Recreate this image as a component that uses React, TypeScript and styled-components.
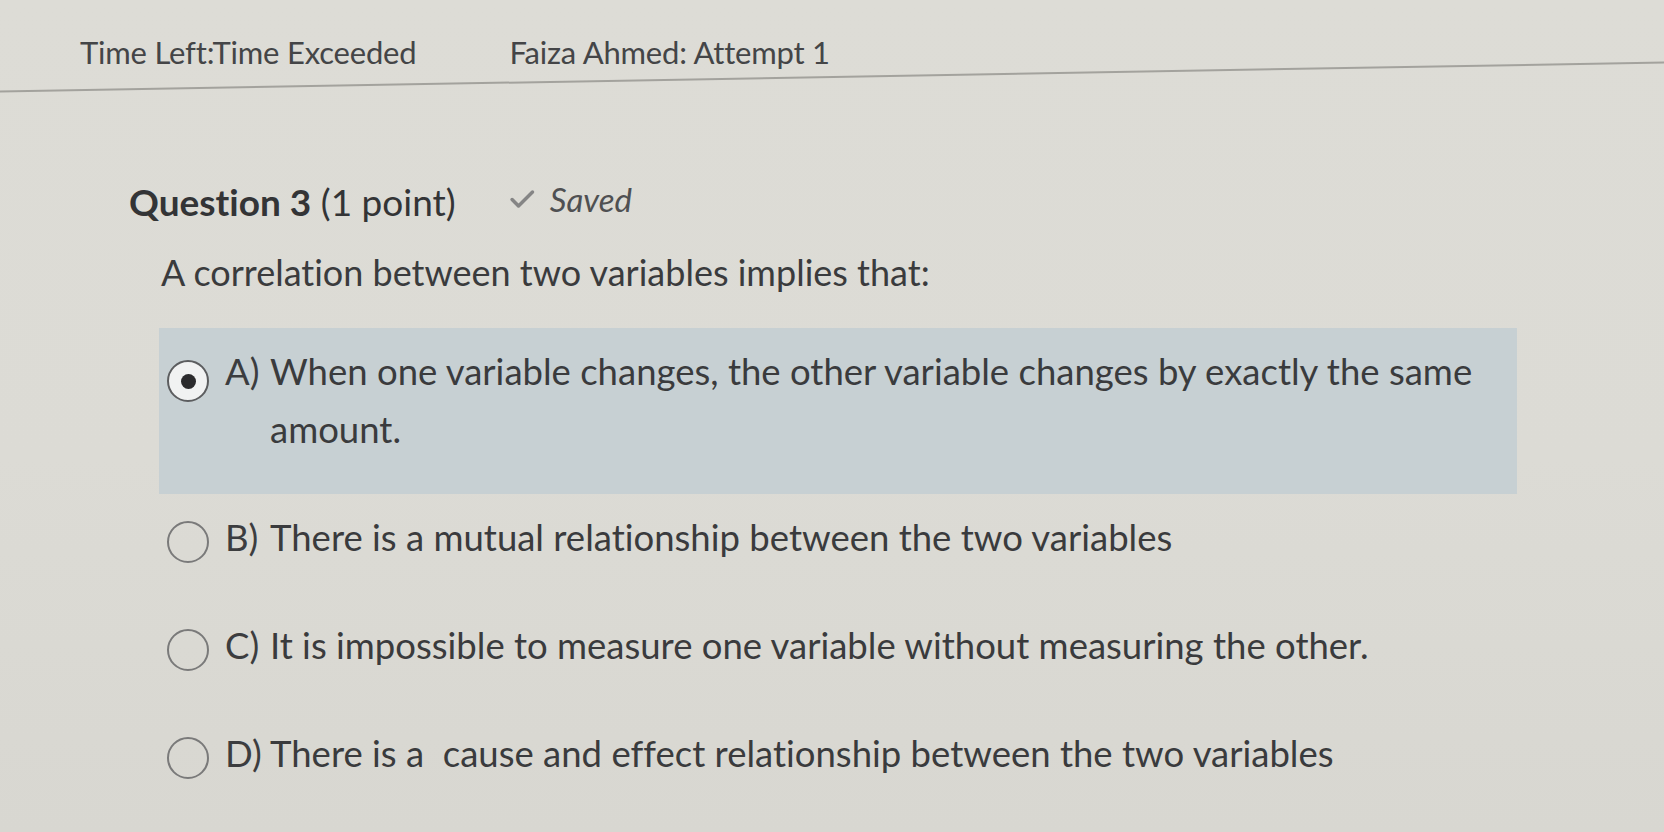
import styled, { createGlobalStyle, css } from 'styled-components';

const GlobalStyle = createGlobalStyle`
  html, body {
    margin: 0;
    padding: 0;
  }

  body {
    background: linear-gradient(180deg, #dddcd6 0%, #dcdbd5 55%, #d8d7d1 100%);
    font-family: Lato, 'Open Sans', 'Liberation Sans', sans-serif;
    font-variant-ligatures: no-common-ligatures;
    color: #3c3d3f;
    overflow: hidden;
  }
`;

interface Choice {
  letter: string;
  text: string;
}

const choices: Choice[] = [
  { letter: 'A)', text: 'When one variable changes, the other variable changes by exactly the same amount.' },
  { letter: 'B)', text: 'There is a mutual relationship between the two variables' },
  { letter: 'C)', text: 'It is impossible to measure one variable without measuring the other.' },
  { letter: 'D)', text: 'There is a  cause and effect relationship between the two variables' },
];

const selectedIndex = 0;

export default function App() {
  return (
    <Page>
      <GlobalStyle />
      <Header>
        <HeaderText>Time Left:Time Exceeded</HeaderText>
        <HeaderText>Faiza Ahmed: Attempt 1</HeaderText>
      </Header>
      <Divider />

      <Main>
        <QuestionHeader>
          <QuestionTitle>
            <strong>Question 3</strong> (1 point)
          </QuestionTitle>
          <SavedStatus>
            <CheckIcon viewBox="0 0 24 24" aria-hidden="true">
              <path d="M3.5 12.5l5.5 5.5L21 6" />
            </CheckIcon>
            <span>Saved</span>
          </SavedStatus>
        </QuestionHeader>

        <Prompt>A correlation between two variables implies that:</Prompt>

        <ChoiceList>
          {choices.map((choice, i) => (
            <ChoiceRow key={choice.letter} $selected={i === selectedIndex}>
              <Radio $checked={i === selectedIndex} />
              <Letter>{choice.letter}</Letter>
              <ChoiceText>{choice.text}</ChoiceText>
            </ChoiceRow>
          ))}
        </ChoiceList>
      </Main>
    </Page>
  );
}

const Page = styled.div`
  min-height: 832px;
`;

const Header = styled.header`
  display: flex;
  align-items: center;
  gap: 93px;
  padding: 33px 0 0 80px;
  height: 38px;
`;

const HeaderText = styled.span`
  font-size: 31px;
  line-height: 38px;
  color: #444547;
  letter-spacing: -0.2px;
`;

const Divider = styled.hr`
  margin: 5px -20px 0;
  border: none;
  height: 2px;
  background: #a3a29d;
  transform: rotate(-1deg);
`;

const Main = styled.main`
  padding: 100px 0 0 129px;
`;

const QuestionHeader = styled.div`
  display: flex;
  align-items: center;
  gap: 52px;
  height: 48px;
`;

const QuestionTitle = styled.h2`
  margin: 0;
  font-size: 37px;
  line-height: 48px;
  font-weight: 400;
  color: #333436;

  strong {
    font-weight: 700;
  }
`;

const SavedStatus = styled.span`
  display: flex;
  align-items: center;
  gap: 14px;
  font-size: 33px;
  font-style: italic;
  color: #4f5052;
  margin-top: -6px;
`;

const CheckIcon = styled.svg`
  width: 28px;
  height: 28px;
  fill: none;
  stroke: #858585;
  stroke-width: 3;
  stroke-linecap: round;
  stroke-linejoin: round;
`;

const Prompt = styled.p`
  margin: 24px 0 0 32px;
  font-size: 36px;
  line-height: 44px;
  color: #3a3b3d;
`;

const ChoiceList = styled.div`
  display: flex;
  flex-direction: column;
  margin: 34px 0 0 30px;
  width: 1358px;
`;

const ChoiceRow = styled.div<{ $selected: boolean }>`
  display: flex;
  align-items: flex-start;
  padding: 14px 16px 36px 8px;

  ${({ $selected }) =>
    $selected &&
    css`
      background: #c7d0d3;
    `}
`;

const Radio = styled.span<{ $checked: boolean }>`
  flex: none;
  box-sizing: border-box;
  width: 42px;
  height: 42px;
  margin-top: 13px;
  border-radius: 50%;
  border: 2.5px solid #7a7a7a;
  background: transparent;
  display: flex;
  align-items: center;
  justify-content: center;

  ${({ $checked }) =>
    $checked &&
    css`
      margin-top: 18px;
      border-color: #5c5d5f;
      background: #f1f2f2;

      &::after {
        content: '';
        width: 15px;
        height: 15px;
        border-radius: 50%;
        background: #2b2b2d;
      }
    `}
`;

const Letter = styled.span`
  flex: none;
  width: 45px;
  margin-left: 16px;
  font-size: 36.5px;
  line-height: 58px;
  white-space: nowrap;
`;

const ChoiceText = styled.span`
  font-size: 36.5px;
  line-height: 58px;
  white-space: pre-wrap;
  color: #3a3b3d;
`;
